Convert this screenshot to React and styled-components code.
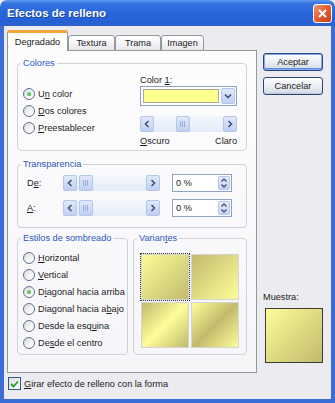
import React from 'react';
import styled, { createGlobalStyle } from 'styled-components';

const LIGHT = '#FDFD9A';
const DARK = '#C2BA6C';

const GlobalStyle = createGlobalStyle`
  html, body { margin: 0; padding: 0; background: #ECEBF0; }
  body {
    font-family: "Liberation Sans", Arial, sans-serif;
    font-size: 9.2px;
    color: #1c1c1c;
  }
`;

const Win = styled.div`
  width: 335px;
  height: 403px;
  display: flex;
  flex-direction: column;
  background: #ECEBF0;
  border-radius: 7px 7px 0 0;
  overflow: hidden;
`;

const TitleBar = styled.div`
  height: 26px;
  flex: none;
  display: flex;
  align-items: center;
  justify-content: space-between;
  padding: 0 3px 0 7px;
  background: linear-gradient(#5E9AF2 0%, #3573E0 14%, #2766DA 50%, #2461D4 85%, #2F62CA 100%);
`;

const Title = styled.div`
  color: #fff;
  font-weight: bold;
  font-size: 11.5px;
  text-shadow: 1px 1px 0 #1B439E;
`;

const CloseBtn = styled.div`
  width: 19px;
  height: 19px;
  box-sizing: border-box;
  border: 1px solid #fff;
  border-radius: 3px;
  background: linear-gradient(135deg, #F19A78, #E0582E 55%, #C9401C);
  display: flex;
  align-items: center;
  justify-content: center;
`;

const Body = styled.div`
  flex: 1;
  display: flex;
  flex-direction: column;
  border: 4px solid #3C6CD6;
  border-top: 0;
  padding: 5px 3px 0 3px;
`;

const Main = styled.div`
  display: flex;
  height: 342px;
`;

const TabArea = styled.div`
  width: 250px;
  display: flex;
  flex-direction: column;
`;

const TabStrip = styled.div`
  height: 20px;
  display: flex;
  align-items: flex-end;
  margin-bottom: -1px;
  position: relative;
  z-index: 1;
`;

const Tab = styled.div`
  width: ${p => p.$w}px;
  height: ${p => (p.$active ? 21 : 16)}px;
  box-sizing: border-box;
  border: 1px solid #919B9C;
  border-bottom: ${p => (p.$active ? '0' : '1px solid #919B9C')};
  border-top: ${p => (p.$active ? '3px solid #F2A53A' : '1px solid #919B9C')};
  border-radius: 3px 3px 0 0;
  background: ${p => (p.$active ? '#FDFDFE' : 'linear-gradient(#FFFFFF, #F1F1F4 70%, #E4E4EA)')};
  display: flex;
  align-items: center;
  justify-content: center;
  padding-bottom: ${p => (p.$active ? 1 : 0)}px;
`;

const Panel = styled.div`
  height: 323px;
  box-sizing: border-box;
  border: 1px solid #919B9C;
  background: linear-gradient(#FDFDFE, #F6F6F9);
  padding: 7px 9px 0 9px;
  display: flex;
  flex-direction: column;
`;

const Group = styled.fieldset`
  margin: 0;
  margin-top: ${p => p.$mt || 0}px;
  padding: 0;
  min-width: 0;
  border: 1px solid #D2D2D6;
  border-radius: 4px;
  flex: ${p => p.$flex || 'none'};
  width: ${p => (p.$w ? `${p.$w}px` : 'auto')};
  box-sizing: border-box;
`;

const Legend = styled.legend`
  padding: 0 2px;
  margin-left: 3px;
  line-height: 11px;
  color: #2F56BE;
`;

const ColorsBody = styled.div`
  display: flex;
  padding: 0 9px 3px 5px;
`;

const RadioCol = styled.div`
  width: 117px;
  padding-top: ${p => p.$top}px;
  display: flex;
  flex-direction: column;
`;

const Option = styled.div`
  height: 17px;
  display: flex;
  align-items: center;
  gap: 3px;
  white-space: nowrap;
`;

const RadioCircle = styled.span`
  width: 12px;
  height: 12px;
  flex: none;
  box-sizing: border-box;
  border-radius: 50%;
  border: 1px solid #5E7290;
  background: linear-gradient(135deg, #D8D8DC, #F6F6F8 60%, #FFFFFF);
  display: flex;
  align-items: center;
  justify-content: center;
  &::after {
    content: '';
    display: ${p => (p.$on ? 'block' : 'none')};
    width: 4px;
    height: 4px;
    border-radius: 50%;
    background: radial-gradient(circle at 35% 35%, #7BE07B, #1F9A2C);
  }
`;

const ColorCol = styled.div`
  width: 97px;
  padding-top: 5px;
  display: flex;
  flex-direction: column;
`;

const Label = styled.div`
  line-height: 12px;
  height: 12px;
  white-space: nowrap;
`;

const Combo = styled.div`
  height: 20px;
  box-sizing: border-box;
  border: 1px solid #8EA3C4;
  background: #fff;
  display: flex;
  align-items: center;
  padding: 1px;
  gap: 2px;
`;

const Swatch = styled.div`
  flex: 1;
  height: 14px;
  margin-left: 1px;
  box-sizing: border-box;
  border: 1px solid #A9A9A9;
  background: #FFFF8C;
`;

const SmallBtn = styled.div`
  width: ${p => p.$w || 14}px;
  height: ${p => p.$h || 16}px;
  flex: none;
  box-sizing: border-box;
  border: 1px solid #B4C6EC;
  border-radius: 2px;
  background: linear-gradient(#E1E9FA, #C0D0F0);
  display: flex;
  align-items: center;
  justify-content: center;
`;

const Thumb = styled(SmallBtn)`
  margin-left: ${p => p.$pos}px;
`;

const Track = styled.div`
  width: ${p => p.$w}px;
  height: 16px;
  flex: none;
  display: flex;
  background: linear-gradient(#F4F7FD, #E4EBF9);
  margin-top: ${p => p.$mt || 0}px;
`;

const Spacer = styled.div`
  flex: 1;
`;

const Ends = styled.div`
  display: flex;
  justify-content: space-between;
  margin-top: 3px;
  line-height: 12px;
`;

const TransBody = styled.div`
  padding: 4px 0 10px 9px;
  display: flex;
  flex-direction: column;
  gap: 7px;
`;

const TransRow = styled.div`
  height: 18px;
  display: flex;
  align-items: center;
`;

const RowLabel = styled.div`
  width: 36px;
`;

const Edit = styled.div`
  width: 60px;
  height: 18px;
  margin-left: 12px;
  box-sizing: border-box;
  border: 1px solid #8EA3C4;
  background: #fff;
  display: flex;
  align-items: center;
  padding: 0 1px 0 3px;
`;

const Spin = styled.div`
  width: 12px;
  height: 14px;
  display: flex;
  flex-direction: column;
  box-sizing: border-box;
  border: 1px solid #B4C6EC;
  border-radius: 2px;
  background: linear-gradient(#E6ECFA, #C6D4F1);
  align-items: center;
  justify-content: space-around;
`;

const BottomRow = styled.div`
  display: flex;
  gap: 5px;
  margin-top: 5px;
`;

const StylesBody = styled.div`
  padding: 5px 0 3px 5px;
  display: flex;
  flex-direction: column;
`;

const TileGrid = styled.div`
  display: grid;
  grid-template-columns: 48px 48px;
  grid-template-rows: 46px 46px;
  gap: 2px;
  padding: 10px 0 0 7px;
`;

const Tile = styled.div`
  box-sizing: border-box;
  border: 1px solid #D4D4D4;
  background: ${p => p.$bg};
  outline: ${p => (p.$sel ? '1px dotted #333' : 'none')};
  outline-offset: 0;
`;

const Side = styled.div`
  width: 60px;
  margin-left: 6px;
  padding: 22px 0 10px 0;
  display: flex;
  flex-direction: column;
  gap: 6px;
`;

const Button = styled.div`
  height: 18px;
  box-sizing: border-box;
  border: 1px solid #27487E;
  border-radius: 3px;
  background: linear-gradient(#FFFFFF, #EEF0F5 45%, #D3D8E3);
  box-shadow: ${p => (p.$default ? 'inset 0 0 0 1px #86A8EC, inset 0 -1px 0 1px #5F8BE0' : 'inset 0 -1px 0 #C0C6D4')};
  display: flex;
  align-items: center;
  justify-content: center;
`;

const Sample = styled.div`
  margin-top: auto;
  display: flex;
  flex-direction: column;
`;

const SampleBox = styled.div`
  width: 58px;
  height: 55px;
  margin: 5px 0 0 2px;
  box-sizing: border-box;
  border: 1px solid #3C3C3C;
  background: linear-gradient(135deg, ${LIGHT}, ${DARK});
`;

const CheckRow = styled.div`
  margin-top: 4px;
  height: 13px;
  display: flex;
  align-items: center;
  padding-left: 1px;
  gap: 3px;
`;

const CheckBox = styled.span`
  width: 13px;
  height: 13px;
  box-sizing: border-box;
  border: 1px solid #2C5A8E;
  background: linear-gradient(135deg, #DCDCE0, #FFFFFF);
  display: flex;
  align-items: center;
  justify-content: center;
`;

const Chev = ({ dir }) => {
  const d = {
    left: 'M4.5 1 L1.5 4 L4.5 7',
    right: 'M1.5 1 L4.5 4 L1.5 7',
  }[dir];
  return (
    <svg width="6" height="8" viewBox="0 0 6 8">
      <path d={d} stroke="#3E5380" strokeWidth="1.6" fill="none" />
    </svg>
  );
};

const DownChev = () => (
  <svg width="8" height="6" viewBox="0 0 8 6">
    <path d="M1 1.5 L4 4.5 L7 1.5" stroke="#3E5380" strokeWidth="1.6" fill="none" />
  </svg>
);

const Grip = () => (
  <svg width="6" height="6" viewBox="0 0 6 6">
    <path d="M0.5 0 V6 M2.5 0 V6 M4.5 0 V6" stroke="#9AAEDB" strokeWidth="1" />
  </svg>
);

const Slider = ({ w, pos, mt }) => (
  <Track $w={w} $mt={mt}>
    <SmallBtn><Chev dir="left" /></SmallBtn>
    <Thumb $pos={pos}><Grip /></Thumb>
    <Spacer />
    <SmallBtn><Chev dir="right" /></SmallBtn>
  </Track>
);

const Spinner = () => (
  <Spin>
    <svg width="6" height="4" viewBox="0 0 6 4"><path d="M0.5 3.5 L3 1 L5.5 3.5" stroke="#3E5380" strokeWidth="1.3" fill="none" /></svg>
    <svg width="6" height="4" viewBox="0 0 6 4"><path d="M0.5 0.5 L3 3 L5.5 0.5" stroke="#3E5380" strokeWidth="1.3" fill="none" /></svg>
  </Spin>
);

const Radio = ({ on, children }) => (
  <Option>
    <RadioCircle $on={on} />
    <span>{children}</span>
  </Option>
);

const tiles = [
  { bg: `linear-gradient(135deg, ${LIGHT}, ${DARK})`, sel: true },
  { bg: `linear-gradient(135deg, ${DARK}, ${LIGHT})` },
  { bg: `linear-gradient(135deg, ${DARK}, ${LIGHT} 50%, ${DARK})` },
  { bg: `linear-gradient(135deg, ${LIGHT}, ${DARK} 50%, ${LIGHT})` },
];

export default function App() {
  return (
    <>
      <GlobalStyle />
      <Win>
        <TitleBar>
          <Title>Efectos de relleno</Title>
          <CloseBtn>
            <svg width="9" height="9" viewBox="0 0 9 9">
              <path d="M1 1 L8 8 M8 1 L1 8" stroke="#fff" strokeWidth="2" />
            </svg>
          </CloseBtn>
        </TitleBar>
        <Body>
          <Main>
            <TabArea>
              <TabStrip>
                <Tab $w={61} $active>Degradado</Tab>
                <Tab $w={47}>Textura</Tab>
                <Tab $w={46}>Trama</Tab>
                <Tab $w={43}>Imagen</Tab>
              </TabStrip>
              <Panel>
                <Group>
                  <Legend>Colores</Legend>
                  <ColorsBody>
                    <RadioCol $top={16}>
                      <Radio on>U<u>n</u> color</Radio>
                      <Radio><u>D</u>os colores</Radio>
                      <Radio><u>P</u>reestablecer</Radio>
                    </RadioCol>
                    <ColorCol>
                      <Label>Color <u>1</u>:</Label>
                      <Combo>
                        <Swatch />
                        <SmallBtn $w={14} $h={16}><DownChev /></SmallBtn>
                      </Combo>
                      <Slider w={97} pos={22} mt={10} />
                      <Ends>
                        <span><u>O</u>scuro</span>
                        <span>Claro</span>
                      </Ends>
                    </ColorCol>
                  </ColorsBody>
                </Group>
                <Group $mt={8}>
                  <Legend>Transparencia</Legend>
                  <TransBody>
                    <TransRow>
                      <RowLabel>D<u>e</u>:</RowLabel>
                      <Slider w={97} pos={2} />
                      <Edit>
                        <Spacer>0 %</Spacer>
                        <Spinner />
                      </Edit>
                    </TransRow>
                    <TransRow>
                      <RowLabel><u>A</u>:</RowLabel>
                      <Slider w={97} pos={2} />
                      <Edit>
                        <Spacer>0 %</Spacer>
                        <Spinner />
                      </Edit>
                    </TransRow>
                  </TransBody>
                </Group>
                <BottomRow>
                  <Group $w={111}>
                    <Legend>Estilos de sombreado</Legend>
                    <StylesBody>
                      <Radio><u>H</u>orizontal</Radio>
                      <Radio><u>V</u>ertical</Radio>
                      <Radio on>D<u>i</u>agonal hacia arriba</Radio>
                      <Radio>Diagonal hacia a<u>b</u>ajo</Radio>
                      <Radio>Desde la esq<u>u</u>ina</Radio>
                      <Radio>De<u>s</u>de el centro</Radio>
                    </StylesBody>
                  </Group>
                  <Group $flex="1">
                    <Legend>Varian<u>t</u>es</Legend>
                    <TileGrid>
                      {tiles.map((t, i) => (
                        <Tile key={i} $bg={t.bg} $sel={t.sel} />
                      ))}
                    </TileGrid>
                  </Group>
                </BottomRow>
              </Panel>
            </TabArea>
            <Side>
              <Button $default>Aceptar</Button>
              <Button>Cancelar</Button>
              <Sample>
                <Label>Muestra:</Label>
                <SampleBox />
              </Sample>
            </Side>
          </Main>
          <CheckRow>
            <CheckBox>
              <svg width="9" height="8" viewBox="0 0 9 8">
                <path d="M1 4 L3.5 6.5 L8 1.5" stroke="#21A121" strokeWidth="1.8" fill="none" />
              </svg>
            </CheckBox>
            <span><u>G</u>irar efecto de relleno con la forma</span>
          </CheckRow>
        </Body>
      </Win>
    </>
  );
}
